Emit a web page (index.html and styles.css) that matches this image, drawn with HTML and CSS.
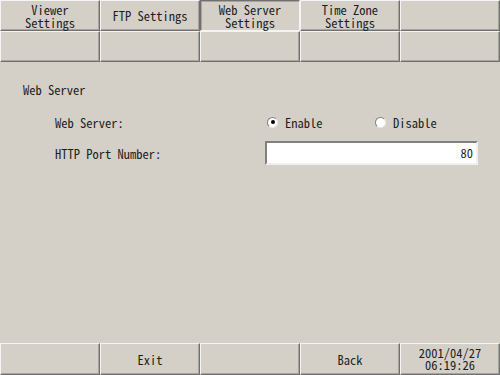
FILE: index.html
```html
<!DOCTYPE html>
<html>
<head>
  <title>Web Server Settings</title>
  <link rel="stylesheet" href="styles.css">
</head>
<body>
  <div class="screen">
    <div class="tabs">
      <div class="key">Viewer<br>Settings</div>
      <div class="key">FTP Settings</div>
      <div class="key active">Web Server<br>Settings</div>
      <div class="key">Time Zone<br>Settings</div>
      <div class="key"></div>
      <div class="key"></div>
      <div class="key"></div>
      <div class="key"></div>
      <div class="key"></div>
      <div class="key"></div>
    </div>

    <div class="panel">
      <div class="section">Web Server</div>
      <div class="row first">
        <span class="label">Web Server:</span>
        <div class="radios">
          <span class="option"><span class="radio on"></span>Enable</span>
          <span class="option"><span class="radio"></span>Disable</span>
        </div>
      </div>
      <div class="row">
        <span class="label">HTTP Port Number:</span>
        <div class="field">80</div>
      </div>
    </div>

    <div class="footer">
      <div class="key"></div>
      <div class="key">Exit</div>
      <div class="key"></div>
      <div class="key">Back</div>
      <div class="key clock">2001/04/27<br>06:19:26</div>
    </div>
  </div>
</body>
</html>
```

FILE: styles.css
```css
body {
  margin: 0;
  background-color: #d4d0c8;
  color: #1e1e1e;
  font-family: "Noto Sans Mono CJK JP", "Liberation Mono", monospace;
  font-size: 12.5px;
}

.screen {
  width: 500px;
  height: 375px;
  display: flex;
  flex-direction: column;
}

.tabs {
  display: grid;
  grid-template-columns: repeat(5, 100px);
  grid-template-rows: 31px 31px;
}

.key {
  box-sizing: border-box;
  border: 1px solid;
  border-color: #f4f4f4 #707070 #707070 #f4f4f4;
  box-shadow: inset -1px -1px #a8a49c;
  display: flex;
  justify-content: center;
  align-items: center;
  text-align: center;
  line-height: 13px;
}

.key.active {
  border-color: #707070 #f4f4f4 #f4f4f4 #707070;
  box-shadow: inset 1px 1px #a8a49c;
}

.panel {
  flex: 1;
  padding: 20px 0 0 23px;
}

.section {
  height: 16px;
  line-height: 16px;
}

.row {
  display: flex;
  align-items: center;
  height: 24px;
  margin-top: 7px;
  padding-left: 32px;
}

.row.first {
  margin-top: 12px;
}

.label {
  width: 210px;
}

.radios {
  display: flex;
  padding-left: 2px;
}

.option {
  width: 108px;
  display: flex;
  align-items: center;
}

.radio {
  box-sizing: border-box;
  width: 11px;
  height: 11px;
  margin-right: 7px;
  border-radius: 50%;
  background-color: #fff;
  border: 1px solid;
  border-color: #808080 #e8e8e8 #e8e8e8 #808080;
  display: flex;
  justify-content: center;
  align-items: center;
}

.radio.on::after {
  content: "";
  width: 4px;
  height: 4px;
  border-radius: 50%;
  background-color: #000;
}

.field {
  box-sizing: border-box;
  width: 213px;
  height: 24px;
  background-color: #fff;
  border: 2px solid;
  border-color: #808080 #f0f0f0 #f0f0f0 #808080;
  text-align: right;
  line-height: 20px;
  padding-right: 3px;
}

.footer {
  display: grid;
  grid-template-columns: repeat(5, 100px);
  height: 32px;
}

.footer .clock {
  line-height: 12px;
}
```
